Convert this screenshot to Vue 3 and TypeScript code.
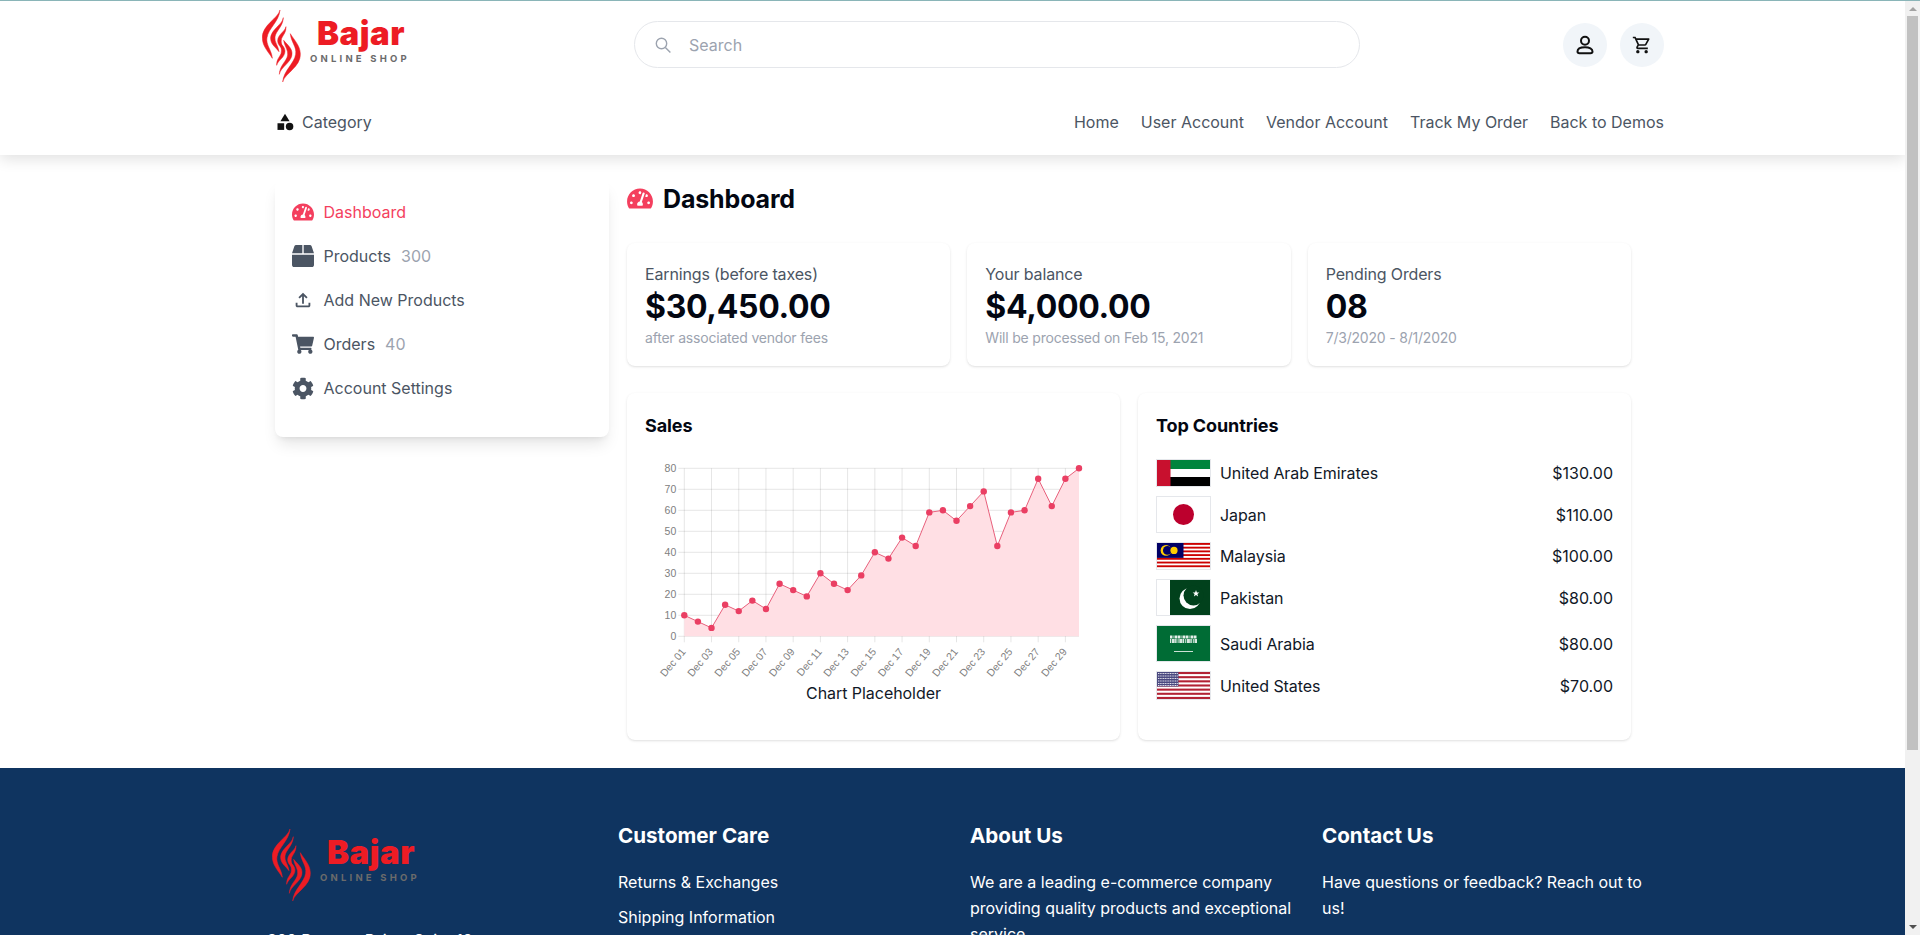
<template>
  <div class="shell">
    <div class="page">
      <header class="header">
        <div class="top-row">
          <svg class="logo" viewBox="0 0 150 76" width="150" height="76">
            <g fill="#ed1c24" stroke="#ed1c24" stroke-width="1.5" transform="translate(-7 -3) scale(.3333)">
              <g v-for="angle in [0, 180]" :key="angle" :transform="`rotate(${angle} 79 123)`">
                <path v-for="d in flames" :key="d" :d="d" />
              </g>
            </g>
            <text x="55" y="37" class="logo-name">Bajar</text>
            <text x="48" y="54" class="logo-sub">ONLINE SHOP</text>
          </svg>
          <div class="search">
            <svg width="18" height="18" viewBox="0 0 18 18" fill="none" stroke="#9ca3af" stroke-width="1.4">
              <circle cx="7.5" cy="7.5" r="5.2" />
              <path d="M11.4 11.4l5 5" />
            </svg>
            <span>Search</span>
          </div>
          <div class="round-btns">
            <button class="round">
              <svg width="24" height="24" viewBox="0 0 24 24" fill="none" stroke="#111" stroke-width="2">
                <circle cx="12" cy="7.7" r="4" />
                <path d="M6.5 20.3h11c1.2 0 2-.8 2-1.8 0-2.6-3-4.3-7.5-4.3s-7.5 1.7-7.5 4.3c0 1 .8 1.8 2 1.8z" />
              </svg>
            </button>
            <button class="round">
              <svg width="20" height="20" viewBox="0 0 24 24" fill="#111">
                <path d="M15.55 13c.75 0 1.41-.41 1.75-1.03l3.58-6.49c.37-.66-.11-1.48-.87-1.48H5.21l-.94-2H1v2h2l3.6 7.59-1.35 2.44C4.52 15.37 5.48 17 7 17h12v-2H7l1.1-2h7.45zM6.16 6h12.15l-2.76 5H8.53L6.16 6zM7 18c-1.1 0-1.99.9-1.99 2S5.9 22 7 22s2-.9 2-2-.9-2-2-2zm10 0c-1.1 0-1.99.9-1.99 2s.89 2 1.99 2 2-.9 2-2-.9-2-2-2z" />
              </svg>
            </button>
          </div>
        </div>
        <nav class="nav-row">
          <div class="category">
            <svg width="20" height="20" viewBox="0 0 24 24" fill="#111">
              <path d="M12 2l-5.5 9h11z" />
              <circle cx="17.5" cy="17.5" r="4.5" />
              <path d="M3 13.5h8v8H3z" />
            </svg>
            <span>Category</span>
          </div>
          <div class="links">
            <a v-for="link in navLinks" :key="link">{{ link }}</a>
          </div>
        </nav>
      </header>

      <main class="content">
        <aside class="sidebar">
          <div v-for="item in menu" :key="item.label" class="menu-item" :class="{ active: item.active }">
            <span class="menu-icon">
              <svg :width="item.w" :height="item.h" :viewBox="item.box" fill="currentColor"><path :d="item.path" /></svg>
            </span>
            <span>{{ item.label }}</span>
            <span v-if="item.count" class="count">{{ item.count }}</span>
          </div>
        </aside>

        <section class="main">
          <h1 class="title">
            <svg width="26" height="23" viewBox="0 0 576 512" fill="#f43f5e"><path :d="gaugePath" /></svg>
            Dashboard
          </h1>

          <div class="stats">
            <div v-for="s in stats" :key="s.label" class="card stat">
              <div class="stat-label">{{ s.label }}</div>
              <div class="stat-value">{{ s.value }}</div>
              <div class="stat-sub">{{ s.sub }}</div>
            </div>
          </div>

          <div class="panels">
            <div class="card panel">
              <h2>Sales</h2>
              <svg class="chart" width="457" height="228" viewBox="0 0 457 228">
                <line v-for="t in yTicks" :key="'h' + t" :x1="plotLeft - 6" :x2="plotRight" :y1="yOf(t)" :y2="yOf(t)" class="grid" />
                <line v-for="(d, i) in oddDays" :key="'v' + d" :x1="xOf(i * 2)" :x2="xOf(i * 2)" :y1="plotTop" :y2="plotBottom + 6" class="grid" />
                <text v-for="t in yTicks" :key="'y' + t" :x="plotLeft - 8" :y="yOf(t) + 3.5" class="tick" text-anchor="end">{{ t }}</text>
                <text
                  v-for="(d, i) in oddDays"
                  :key="'x' + d"
                  class="tick"
                  text-anchor="end"
                  :transform="`translate(${xOf(i * 2) + 2} 201) rotate(-50)`"
                >{{ d }}</text>
                <path :d="areaPath" fill="#ffdfe4" />
                <path :d="linePath" fill="none" stroke="#e8607c" stroke-width="1" />
                <circle v-for="(v, i) in sales" :key="'p' + i" :cx="xOf(i)" :cy="yOf(v)" r="3.2" fill="#ea3f63" />
              </svg>
              <div class="chart-caption">Chart Placeholder</div>
            </div>

            <div class="card panel">
              <h2>Top Countries</h2>
              <ul class="countries">
                <li v-for="c in countries" :key="c.name">
                  <svg class="flag" :style="{ height: c.h + 'px' }" :viewBox="`0 0 53 ${c.h - 2}`" preserveAspectRatio="none">
                    <template v-if="c.code === 'ae'">
                      <rect width="53" height="9" fill="#00843d" />
                      <rect y="9" width="53" height="9" fill="#fff" />
                      <rect y="17" width="53" height="9" fill="#000" />
                      <rect width="13.5" height="26" fill="#c8102e" />
                    </template>
                    <template v-else-if="c.code === 'jp'">
                      <circle cx="26.5" cy="17.5" r="10.5" fill="#bc002d" />
                    </template>
                    <template v-else-if="c.code === 'my'">
                      <rect v-for="n in 7" :key="n" :y="(n - 1) * 3.72" width="53" height="1.86" fill="#cc0001" />
                      <rect width="26.5" height="14.9" fill="#010066" />
                      <circle cx="9" cy="7.4" r="5.4" fill="#ffcc00" />
                      <circle cx="10.4" cy="7.4" r="4.4" fill="#010066" />
                      <circle cx="17" cy="7.4" r="3.6" fill="#ffcc00" />
                    </template>
                    <template v-else-if="c.code === 'pk'">
                      <rect x="13" width="40" height="35" fill="#01411c" />
                      <circle cx="33" cy="18.5" r="10.5" fill="#fff" />
                      <circle cx="36.5" cy="15.5" r="10" fill="#01411c" />
                      <path d="M39 10l.9 2.4 2.5.1-2 1.5.7 2.4-2.1-1.4-2.1 1.4.7-2.4-2-1.5 2.5-.1z" fill="#fff" />
                    </template>
                    <template v-else-if="c.code === 'sa'">
                      <rect width="53" height="35" fill="#006c35" />
                      <path d="M13 11h27" stroke="#fff" stroke-width="3" stroke-dasharray="2 .5 1 1 3 .5" opacity=".9" />
                      <path d="M13 15h27" stroke="#fff" stroke-width="4" stroke-dasharray="1 .7 3 .4 1.5 1" opacity=".85" />
                      <path d="M17 25.5h19" stroke="#fff" stroke-width="1" opacity=".8" />
                    </template>
                    <template v-else>
                      <rect width="53" height="27" fill="#fff" />
                      <rect v-for="n in 7" :key="n" :y="(n - 1) * 4.15" width="53" height="2.08" fill="#b22234" />
                      <rect width="21.5" height="14.5" fill="#4a4980" />
                      <path d="M1 1.5h20M1 4h20M1 6.5h20M1 9h20M1 11.5h20M1 13.5h20" stroke="#fff" stroke-width="1.2" stroke-dasharray="1.1 .6" opacity=".85" />
                    </template>
                  </svg>
                  <span class="country-name">{{ c.name }}</span>
                  <span class="country-amount">{{ c.amount }}</span>
                </li>
              </ul>
            </div>
          </div>
        </section>
      </main>

      <footer class="footer">
        <div class="footer-grid">
          <div>
            <svg class="logo footer-logo" viewBox="0 0 150 76" width="150" height="76">
              <g fill="#ed1c24" stroke="#ed1c24" stroke-width="1.5" transform="translate(-7 -3) scale(.3333)">
                <g v-for="angle in [0, 180]" :key="angle" :transform="`rotate(${angle} 79 123)`">
                  <path v-for="d in flames" :key="d" :d="d" />
                </g>
              </g>
              <text x="55" y="37" class="logo-name">Bajar</text>
              <text x="48" y="54" class="logo-sub">ONLINE SHOP</text>
            </svg>
            <p class="address">399 Bumper Drive, Suite 12<br />New York, NY 10001</p>
          </div>
          <div>
            <h3>Customer Care</h3>
            <a v-for="link in careLinks" :key="link" class="footer-link">{{ link }}</a>
          </div>
          <div>
            <h3>About Us</h3>
            <p>We are a leading e-commerce company providing quality products and exceptional service.</p>
          </div>
          <div>
            <h3>Contact Us</h3>
            <p>Have questions or feedback? Reach out to us!</p>
          </div>
        </div>
      </footer>
    </div>

    <div class="scrollbar">
      <span class="arrow-up"></span>
      <span class="thumb"></span>
      <span class="arrow-down"></span>
    </div>
  </div>
</template>

<script setup lang="ts">
import { computed } from "vue";

const flames = [
  "M75 15C70 40 20 60 22 100C23 125 40 140 52 160C50 135 32 120 36 98C40 70 72 50 75 15Z",
  "M85 38C82 60 45 75 47 102C48 118 60 125 72 140C70 122 58 112 60 96C62 78 84 65 85 38Z",
  "M93 65C90 80 68 88 68 108C68 118 76 125 82 132C82 120 76 112 80 100C84 90 94 82 93 65Z",
];

const gaugePath =
  "M288 32C128.94 32 0 160.94 0 320c0 52.8 14.25 102.26 39.06 144.8 5.61 9.62 16.3 15.2 27.44 15.2h443c11.14 0 21.83-5.58 27.44-15.2C561.75 422.26 576 372.8 576 320c0-159.06-128.94-288-288-288zm0 64c14.71 0 26.58 10.13 30.32 23.65-1.11 2.26-2.64 4.23-3.45 6.67l-9.22 27.67c-5.13 3.49-10.97 6.01-17.64 6.01-17.67 0-32-14.33-32-32S270.33 96 288 96zM96 384c-17.67 0-32-14.33-32-32s14.33-32 32-32 32 14.33 32 32-14.33 32-32 32zm48-160c-17.67 0-32-14.33-32-32s14.33-32 32-32 32 14.33 32 32-14.33 32-32 32zm246.77-72.41l-61.33 184C343.13 347.33 352 364.54 352 384c0 11.72-3.38 22.55-8.88 32H232.88c-5.5-9.45-8.88-20.28-8.88-32 0-33.94 26.5-61.43 59.9-63.59l61.34-184.01c4.17-12.56 17.73-19.45 30.36-15.17 12.57 4.19 19.35 17.77 15.17 30.36zm14.66 57.2l15.52-46.55c3.47-1.29 7.13-2.23 11.05-2.23 17.67 0 32 14.33 32 32s-14.33 32-32 32c-11.38-.01-20.89-6.28-26.57-15.22zM480 384c-17.67 0-32-14.33-32-32s14.33-32 32-32 32 14.33 32 32-14.33 32-32 32z";

const navLinks = ["Home", "User Account", "Vendor Account", "Track My Order", "Back to Demos"];
const careLinks = ["Returns & Exchanges", "Shipping Information", "Privacy Policy", "Terms & Conditions"];

const menu = [
  { label: "Dashboard", active: true, w: 22, h: 20, box: "0 0 576 512", path: gaugePath },
  {
    label: "Products",
    count: 300,
    w: 22,
    h: 22,
    box: "0 0 512 512",
    path: "M509.5 184.6L458.9 32.8C452.4 13.2 434.1 0 413.4 0H272v192h238.7c-.4-2.5-.4-5-1.2-7.4zM240 0H98.6c-20.7 0-39 13.2-45.5 32.8L2.5 184.6c-.8 2.4-.8 4.9-1.2 7.4H240V0zM0 224v240c0 26.5 21.5 48 48 48h416c26.5 0 48-21.5 48-48V224H0z",
  },
  {
    label: "Add New Products",
    w: 24,
    h: 24,
    box: "0 0 24 24",
    path: "M18 15v3H6v-3H4v3c0 1.1.9 2 2 2h12c1.1 0 2-.9 2-2v-3h-2zM7 9l1.41 1.41L11 7.83V16h2V7.83l2.59 2.58L17 9l-5-5-5 5z",
  },
  {
    label: "Orders",
    count: 40,
    w: 22,
    h: 20,
    box: "0 0 576 512",
    path: "M528.12 301.319l47.273-208C578.806 78.301 567.391 64 551.99 64H159.208l-9.166-44.81C147.758 8.021 137.93 0 126.529 0H24C10.745 0 0 10.745 0 24v16c0 13.255 10.745 24 24 24h69.883l70.248 343.435C147.325 417.1 136 435.222 136 456c0 30.928 25.072 56 56 56s56-25.072 56-56c0-15.674-6.447-29.835-16.824-40h209.647C430.447 426.165 424 440.326 424 456c0 30.928 25.072 56 56 56s56-25.072 56-56c0-22.172-12.888-41.332-31.579-50.405l5.517-24.276c3.413-15.018-8.002-29.319-23.403-29.319H218.117l-6.545-32h293.145c11.206 0 20.92-7.754 23.403-18.681z",
  },
  {
    label: "Account Settings",
    w: 23,
    h: 23,
    box: "0 0 512 512",
    path: "M487.4 315.7l-42.6-24.6c4.3-23.2 4.3-47 0-70.2l42.6-24.6c4.9-2.8 7.1-8.6 5.5-14-11.1-35.6-30-67.8-54.7-94.6-3.8-4.1-10-5.1-14.8-2.3L380.8 110c-17.9-15.4-38.5-27.3-60.8-35.1V25.8c0-5.6-3.9-10.5-9.4-11.7-36.7-8.2-74.3-7.8-109.2 0-5.5 1.2-9.4 6.1-9.4 11.7V75c-22.2 7.9-42.8 19.8-60.8 35.1L88.7 85.5c-4.9-2.8-11-1.9-14.8 2.3-24.7 26.7-43.6 58.9-54.7 94.6-1.7 5.4.6 11.2 5.5 14L67.3 221c-4.3 23.2-4.3 47 0 70.2l-42.6 24.6c-4.9 2.8-7.1 8.6-5.5 14 11.1 35.6 30 67.8 54.7 94.6 3.8 4.1 10 5.1 14.8 2.3l42.6-24.6c17.9 15.4 38.5 27.3 60.8 35.1v49.2c0 5.6 3.9 10.5 9.4 11.7 36.7 8.2 74.3 7.8 109.2 0 5.5-1.2 9.4-6.1 9.4-11.7v-49.2c22.2-7.9 42.8-19.8 60.8-35.1l42.6 24.6c4.9 2.8 11 1.9 14.8-2.3 24.7-26.7 43.6-58.9 54.7-94.6 1.5-5.5-.7-11.3-5.6-14.1zM256 336c-44.1 0-80-35.9-80-80s35.9-80 80-80 80 35.9 80 80-35.9 80-80 80z",
  },
];

const stats = [
  { label: "Earnings (before taxes)", value: "$30,450.00", sub: "after associated vendor fees" },
  { label: "Your balance", value: "$4,000.00", sub: "Will be processed on Feb 15, 2021" },
  { label: "Pending Orders", value: "08", sub: "7/3/2020 - 8/1/2020" },
];

const countries = [
  { code: "ae", name: "United Arab Emirates", amount: "$130.00", h: 28 },
  { code: "jp", name: "Japan", amount: "$110.00", h: 37 },
  { code: "my", name: "Malaysia", amount: "$100.00", h: 28 },
  { code: "pk", name: "Pakistan", amount: "$80.00", h: 37 },
  { code: "sa", name: "Saudi Arabia", amount: "$80.00", h: 37 },
  { code: "us", name: "United States", amount: "$70.00", h: 29 },
];

const sales = [10, 7, 4, 15, 12, 17, 13, 25, 22, 19, 30, 25, 22, 29, 40, 37, 47, 43, 59, 60, 55, 62, 69, 43, 59, 60, 75, 62, 75, 80];
const yTicks = [0, 10, 20, 30, 40, 50, 60, 70, 80];
const oddDays = Array.from({ length: 15 }, (_, i) => `Dec ${String(i * 2 + 1).padStart(2, "0")}`);

const plotLeft = 39.3;
const plotRight = 434;
const plotTop = 17.3;
const plotBottom = 185.3;

const xOf = (i: number) => plotLeft + (i * (plotRight - plotLeft)) / 29;
const yOf = (v: number) => plotBottom - (v * (plotBottom - plotTop)) / 80;

const linePath = computed(() => sales.map((v, i) => `${i ? "L" : "M"}${xOf(i).toFixed(1)} ${yOf(v).toFixed(1)}`).join(""));
const areaPath = computed(() => `${linePath.value}L${plotRight} ${plotBottom}L${plotLeft} ${plotBottom}Z`);
</script>

<style>
html,
body {
  margin: 0;
  height: 100%;
  overflow: hidden;
}
</style>

<style scoped>
.shell {
  height: 100vh;
  box-sizing: border-box;
  border-top: 1px solid #8ab5b8;
  display: flex;
}

.page {
  flex: 1;
  min-width: 0;
  overflow: hidden;
  background: #fff;
  color: #111;
  font-family: Inter, "Liberation Sans", sans-serif;
  font-size: 16px;
}

.scrollbar {
  flex: none;
  width: 15px;
  background: #f1f1f1;
  display: flex;
  flex-direction: column;
  align-items: center;
  padding-top: 6px;
  box-sizing: border-box;
}

.arrow-up,
.arrow-down {
  width: 0;
  height: 0;
  border-left: 4px solid transparent;
  border-right: 4px solid transparent;
}

.arrow-up {
  border-bottom: 4px solid #a3a3a3;
}

.arrow-down {
  margin-top: auto;
  margin-bottom: 6px;
  border-top: 4px solid #505050;
}

.thumb {
  margin-top: 5px;
  width: 11px;
  height: 734px;
  background: #c1c1c1;
}

.header {
  box-shadow: 0 4px 14px rgba(0, 0, 0, 0.12);
  padding: 0 241px 0 275px;
  position: relative;
}

.top-row {
  display: flex;
  align-items: center;
  height: 88px;
}

.logo {
  display: block;
  flex: none;
}

.top-row .logo {
  margin: 2px 0 0 -13px;
}

.logo-name {
  font-family: Inter, sans-serif;
  font-size: 33px;
  font-weight: 900;
  letter-spacing: 0.5px;
  fill: #ed1c24;
}

.logo-sub {
  font-family: Inter, sans-serif;
  font-size: 9.5px;
  font-weight: 700;
  letter-spacing: 3.2px;
  fill: #6b6b6b;
}

.search {
  margin: -1px 0 0 222px;
  width: 726px;
  height: 47px;
  box-sizing: border-box;
  display: flex;
  align-items: center;
  gap: 17px;
  padding-left: 19px;
  border: 1px solid #e5e7eb;
  border-radius: 24px;
  color: #9ca3af;
}

.round-btns {
  margin-left: auto;
  display: flex;
  gap: 13px;
}

.round {
  width: 44px;
  height: 44px;
  border: 0;
  padding: 0;
  border-radius: 50%;
  background: #f1f5f9;
  display: flex;
  align-items: center;
  justify-content: center;
}

.nav-row {
  height: 66px;
  display: flex;
  align-items: center;
  justify-content: space-between;
  color: #4b5563;
}

.category {
  display: flex;
  align-items: center;
  gap: 7px;
}

.links {
  display: flex;
  gap: 22px;
}

.content {
  display: flex;
  align-items: flex-start;
  gap: 18px;
  padding: 25px 274px 28px 275px;
}

.sidebar {
  flex: none;
  width: 334px;
  box-sizing: border-box;
  padding: 10px 17px 27px;
  border-radius: 8px;
  background: #fff;
  box-shadow: 0 10px 15px -3px rgba(0, 0, 0, 0.1), 0 4px 6px -4px rgba(0, 0, 0, 0.1);
}

.menu-item {
  height: 44px;
  display: flex;
  align-items: center;
  color: #4b5563;
}

.menu-item.active {
  color: #f43f5e;
}

.menu-icon {
  width: 22px;
  margin-right: 9.5px;
  display: flex;
  justify-content: center;
}

.count {
  margin-left: 10px;
  color: #9ca3af;
}

.main {
  flex: 1;
  min-width: 0;
}

.title {
  margin: 0;
  height: 37px;
  display: flex;
  align-items: center;
  gap: 10px;
  font-size: 25px;
  font-weight: 700;
  letter-spacing: -0.15px;
  color: #030712;
}

.stats {
  margin-top: 26px;
  display: grid;
  grid-template-columns: repeat(3, 1fr);
  gap: 17px;
}

.card {
  border-radius: 8px;
  background: #fff;
  box-shadow: 0 1px 3px rgba(0, 0, 0, 0.1), 0 1px 2px -1px rgba(0, 0, 0, 0.1);
}

.stat {
  padding: 19px 18px 18px;
}

.stat-label {
  color: #4b5563;
  line-height: 24px;
  letter-spacing: -0.15px;
}

.stat-value {
  margin-top: 1px;
  font-size: 32px;
  font-weight: 700;
  letter-spacing: -0.3px;
  line-height: 40px;
  color: #030712;
}

.stat-sub {
  margin-top: 1px;
  font-size: 14px;
  line-height: 20px;
  letter-spacing: -0.2px;
  color: #9ca3af;
}

.panels {
  margin-top: 27px;
  display: grid;
  grid-template-columns: repeat(2, 1fr);
  gap: 18px;
}

.panel {
  padding: 19px 18px 36px;
  height: 347px;
  box-sizing: border-box;
}

.panel h2 {
  margin: 0;
  font-size: 18px;
  font-weight: 700;
  line-height: 28px;
  letter-spacing: -0.1px;
  color: #030712;
}

.chart {
  display: block;
  margin-top: 11px;
}

.grid {
  stroke: rgba(0, 0, 0, 0.1);
  stroke-width: 1;
}

.tick {
  font-family: "Liberation Sans", sans-serif;
  font-size: 10.5px;
  fill: #808080;
}

.chart-caption {
  margin-top: 2px;
  text-align: center;
  line-height: 24px;
  letter-spacing: -0.05px;
  color: #111827;
}

.countries {
  list-style: none;
  margin: 19px 0 0;
  padding: 0;
  display: flex;
  flex-direction: column;
  gap: 9px;
}

.countries li {
  display: flex;
  align-items: center;
}

.flag {
  flex: none;
  width: 55px;
  box-sizing: border-box;
  border: 1px solid #e5e7eb;
  background: #fff;
  display: block;
}

.country-name {
  margin-left: 9px;
  flex: 1;
  letter-spacing: -0.08px;
  color: #111827;
}

.country-amount {
  color: #111827;
}

.footer {
  height: 382px;
  box-sizing: border-box;
  padding: 56px 0 0 266px;
  background: #0f3460;
  color: #fff;
}

.footer-grid {
  display: grid;
  grid-template-columns: repeat(4, 330px);
  gap: 22px;
}

.footer-logo {
  margin: 3px 0 0 6px;
}

.footer h3 {
  margin: 0 0 21px;
  font-size: 20.6px;
  font-weight: 700;
  line-height: 24px;
}

.footer p {
  margin: 0;
  line-height: 26px;
}

.footer .address {
  margin: 24px 0 0 1px;
}

.footer-link {
  display: block;
  line-height: 27px;
  margin-bottom: 8px;
}
</style>
